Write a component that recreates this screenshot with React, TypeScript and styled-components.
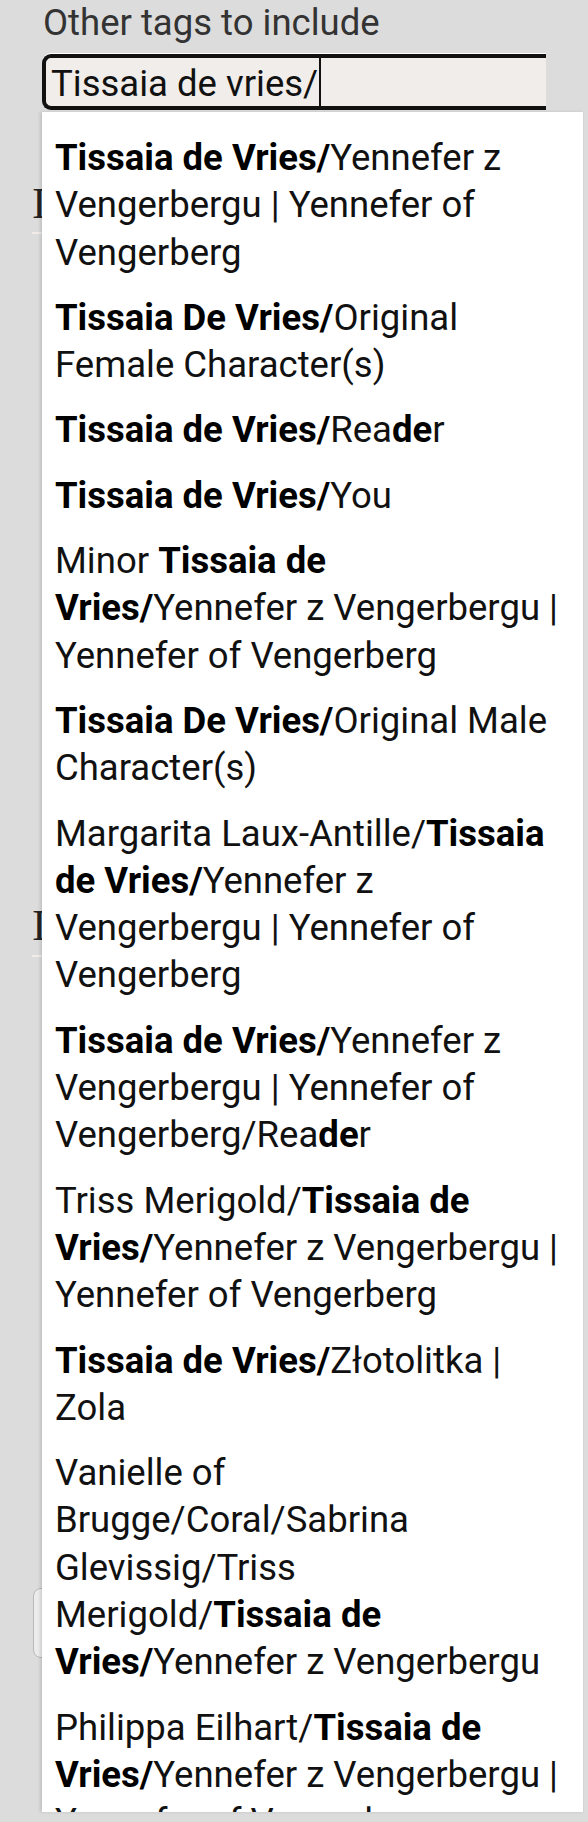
import styled, { createGlobalStyle } from "styled-components";

const GlobalStyle = createGlobalStyle`
  html, body {
    margin: 0;
    padding: 0;
  }
  body {
    background: #dcdcdc;
    font-family: Roboto, "Noto Sans", sans-serif;
  }
`;

// ** marks the part of each suggestion that matches the typed text
const suggestions = [
  "**Tissaia de Vries/**Yennefer z Vengerbergu | Yennefer of Vengerberg",
  "**Tissaia De Vries/**Original Female Character(s)",
  "**Tissaia de Vries/**Rea**de**r",
  "**Tissaia de Vries/**You",
  "Minor **Tissaia de Vries/**Yennefer z Vengerbergu | Yennefer of Vengerberg",
  "**Tissaia De Vries/**Original Male Character(s)",
  "Margarita Laux-Antille/**Tissaia de Vries/**Yennefer z Vengerbergu | Yennefer of Vengerberg",
  "**Tissaia de Vries/**Yennefer z Vengerbergu | Yennefer of Vengerberg/Rea**de**r",
  "Triss Merigold/**Tissaia de Vries/**Yennefer z Vengerbergu | Yennefer of Vengerberg",
  "**Tissaia de Vries/**Złotolitka | Zola",
  "Vanielle of Brugge/Coral/Sabrina Glevissig/Triss Merigold/**Tissaia de Vries/**Yennefer z Vengerbergu",
  "Philippa Eilhart/**Tissaia de Vries/**Yennefer z Vengerbergu | Yennefer of Vengerberg",
];

const Highlighted = ({ text }: { text: string }) => (
  <>
    {text.split("**").map((part, i) =>
      i % 2 === 1 ? <Match key={i}>{part}</Match> : <span key={i}>{part}</span>
    )}
  </>
);

const App = () => {
  return (
    <>
      <GlobalStyle />
      <Page>
        <Field>
          <Label>Other tags to include</Label>
          <InputBox>
            Tissaia de vries/
            <Caret />
          </InputBox>
        </Field>

        {/* form content that sits under the autocomplete list */}
        <HiddenLabel $top={72}>Include</HiddenLabel>
        <HiddenRule $top={6} />
        <HiddenLabel $top={670}>Include</HiddenLabel>
        <HiddenRule $top={7} />
        <HiddenButton $top={631} />

        <Dropdown>
          {suggestions.map((s) => (
            <Item key={s}>
              <Highlighted text={s} />
            </Item>
          ))}
        </Dropdown>
      </Page>
    </>
  );
};

export default App;

// STYLED COMPONENTS

const Page = styled.div`
  position: relative;
  height: 1822px;
  overflow: hidden;
  padding-top: 2px;
  box-sizing: border-box;
`;

const Field = styled.div`
  display: flex;
  flex-direction: column;
  gap: 10px;
  padding-left: 43px;
`;

const Label = styled.div`
  font-size: 36.5px;
  line-height: 42px;
  color: #333;
`;

const InputBox = styled.div`
  display: flex;
  align-items: center;
  box-sizing: border-box;
  width: 504px;
  height: 56px;
  margin-left: -1px;
  padding: 3px 0 0 5px;
  background: #f1edea;
  border: 4px solid #111;
  border-right: none;
  border-radius: 9px 0 0 9px;
  box-shadow: 0 -1px 0 #fff;
  font-size: 36.5px;
  color: #111;
  white-space: pre;
`;

const Caret = styled.span`
  align-self: stretch;
  width: 2px;
  margin: -3px 0 0 1px;
  background: #111;
`;

const HiddenLabel = styled.div<{ $top: number }>`
  margin-top: ${(p) => p.$top}px;
  padding-left: 32px;
  font-family: "Liberation Serif", serif;
  font-size: 44px;
  line-height: 44px;
  color: #222;
`;

const HiddenRule = styled.div<{ $top: number }>`
  margin: ${(p) => p.$top}px 0 0 32px;
  width: 40px;
  height: 2px;
  background: #f3ebe8;
`;

const HiddenButton = styled.div<{ $top: number }>`
  margin: ${(p) => p.$top}px 0 0 33px;
  width: 200px;
  height: 70px;
  box-sizing: border-box;
  border: 1px solid #b8b8b8;
  border-radius: 8px;
  background: #ececec;
`;

const Dropdown = styled.ul`
  position: absolute;
  top: 112px;
  left: 42px;
  right: 4px;
  bottom: 10px;
  margin: 0;
  padding: 13px 0 0;
  list-style: none;
  overflow: hidden;
  background: #fff;
  border-right: 1px solid #d4d4d4;
  box-shadow: -2px 0 3px rgba(0, 0, 0, 0.12);
`;

const Item = styled.li`
  padding: 9px 21px 9px 13px;
  font-size: 36.5px;
  line-height: 47.3px;
  color: #111;
`;

const Match = styled.b`
  font-weight: 700;
  color: #000;
`;
